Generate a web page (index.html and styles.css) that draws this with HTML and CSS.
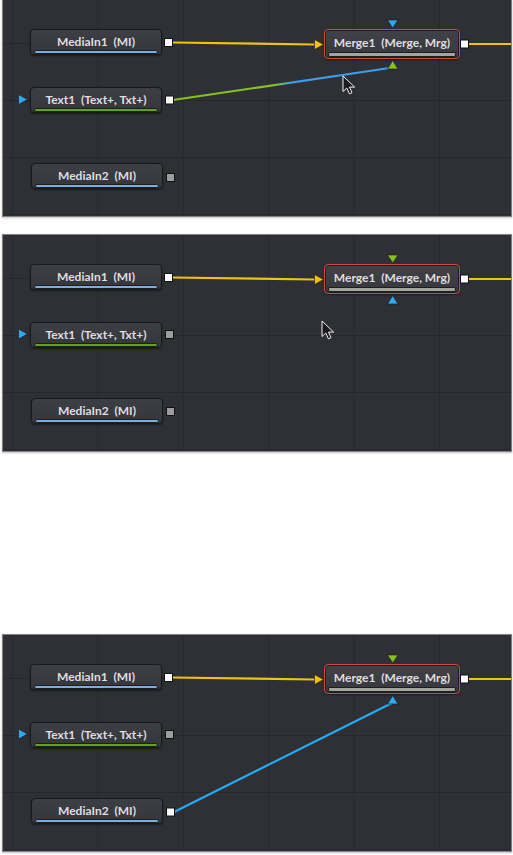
FILE: index.html
```html
<!DOCTYPE html>
<html lang="en">
<head>
    <meta charset="UTF-8">
    <meta name="viewport" content="width=device-width, initial-scale=1.0">
    <title>Node Editor - Merge connections</title>
    <link rel="stylesheet" href="styles.css">
</head>
<body>

    <!-- Step 1: dragging the Text1 output onto the Merge -->
    <div class="panel">
        <div class="node node-media node-in1"><span class="label">MediaIn1  (MI)</span><span class="bar"></span></div>
        <div class="node node-text node-txt"><span class="label">Text1  (Text+, Txt+)</span><span class="bar"></span></div>
        <div class="node node-media node-in2"><span class="label">MediaIn2  (MI)</span><span class="bar"></span></div>
        <div class="node node-merge"><span class="label">Merge1  (Merge, Mrg)</span><span class="bar"></span></div>

        <svg class="wires" width="508" height="216" viewBox="0 0 508 216">
            <defs>
                <linearGradient id="fg" gradientUnits="userSpaceOnUse" x1="170" y1="100" x2="390" y2="67">
                    <stop offset="0.46" stop-color="#86c21e"/>
                    <stop offset="0.54" stop-color="#3c9de8"/>
                </linearGradient>
            </defs>
            <path d="M169 42.5 L312 44.5" class="wire-yellow"/>
            <path d="M465 44 L508 44" class="wire-yellow"/>
            <path d="M170 100 L390 67.5" stroke="url(#fg)" stroke-width="2.2" fill="none"/>

            <rect x="161.5" y="38.5" width="8" height="8" class="port"/>
            <rect x="162.5" y="96" width="8" height="8" class="port"/>
            <rect x="163.5" y="173.5" width="8" height="8" class="port port-off"/>
            <polygon points="15.5,94.5 24.5,99.5 15.5,104.5" class="tri-blue"/>
            <polygon points="311.5,39.5 320.5,44.5 311.5,49.5" class="tri-yellow"/>
            <rect x="457.5" y="40" width="8" height="8" class="port"/>
            <polygon points="384.5,20 395,20 389.7,28" class="tri-blue"/>
            <polygon points="384.5,69 395,69 389.7,60.5" class="tri-green"/>
        </svg>

        <svg class="cursor cursor-a" width="14" height="20" viewBox="0 0 14 20">
            <path d="M1 1 L1 16.5 L4.8 13 L7.4 18.8 L10 17.7 L7.5 12.1 L12.6 12.1 Z"/>
        </svg>
    </div>

    <!-- Step 2: the Merge inputs swapped -->
    <div class="panel">
        <div class="node node-media node-in1"><span class="label">MediaIn1  (MI)</span><span class="bar"></span></div>
        <div class="node node-text node-txt"><span class="label">Text1  (Text+, Txt+)</span><span class="bar"></span></div>
        <div class="node node-media node-in2"><span class="label">MediaIn2  (MI)</span><span class="bar"></span></div>
        <div class="node node-merge"><span class="label">Merge1  (Merge, Mrg)</span><span class="bar"></span></div>

        <svg class="wires" width="508" height="216" viewBox="0 0 508 216">
            <path d="M169 42.5 L312 44.5" class="wire-yellow"/>
            <path d="M465 44 L508 44" class="wire-yellow"/>

            <rect x="161.5" y="38.5" width="8" height="8" class="port"/>
            <rect x="162.5" y="95.5" width="8" height="8" class="port port-off"/>
            <rect x="163.5" y="172.5" width="8" height="8" class="port port-off"/>
            <polygon points="15.5,94 24.5,99 15.5,104" class="tri-blue"/>
            <polygon points="311.5,39.5 320.5,44.5 311.5,49.5" class="tri-yellow"/>
            <rect x="457.5" y="40" width="8" height="8" class="port"/>
            <polygon points="384.5,20 395,20 389.7,28" class="tri-green"/>
            <polygon points="384.5,69 395,69 389.7,60.5" class="tri-blue"/>
        </svg>

        <svg class="cursor cursor-b" width="14" height="20" viewBox="0 0 14 20">
            <path d="M1 1 L1 16.5 L4.8 13 L7.4 18.8 L10 17.7 L7.5 12.1 L12.6 12.1 Z"/>
        </svg>
    </div>

    <!-- Step 3: MediaIn2 connected to the Merge -->
    <div class="panel panel-last">
        <div class="node node-media node-in1"><span class="label">MediaIn1  (MI)</span><span class="bar"></span></div>
        <div class="node node-text node-txt"><span class="label">Text1  (Text+, Txt+)</span><span class="bar"></span></div>
        <div class="node node-media node-in2"><span class="label">MediaIn2  (MI)</span><span class="bar"></span></div>
        <div class="node node-merge"><span class="label">Merge1  (Merge, Mrg)</span><span class="bar"></span></div>

        <svg class="wires" width="508" height="216" viewBox="0 0 508 216">
            <path d="M169 42.5 L312 44.5" class="wire-yellow"/>
            <path d="M465 44 L508 44" class="wire-yellow"/>
            <path d="M171 177 L390 67.5" class="wire-blue"/>

            <rect x="161.5" y="38.5" width="8" height="8" class="port"/>
            <rect x="162.5" y="95.5" width="8" height="8" class="port port-off"/>
            <rect x="163.5" y="173" width="8" height="8" class="port"/>
            <polygon points="15.5,94 24.5,99 15.5,104" class="tri-blue"/>
            <polygon points="311.5,39.5 320.5,44.5 311.5,49.5" class="tri-yellow"/>
            <rect x="457.5" y="40" width="8" height="8" class="port"/>
            <polygon points="384.5,20 395,20 389.7,28" class="tri-green"/>
            <polygon points="384.5,69 395,69 389.7,60.5" class="tri-blue"/>
        </svg>
    </div>

</body>
</html>
```

FILE: styles.css
```css
body {
    margin: 0;
    padding: 0;
    background-color: #fff;
    font-family: Lato, "Open Sans", sans-serif;
}

/* node editor panel with its grid */
.panel {
    position: relative;
    width: 508px;
    height: 216px;
    margin: 0 0 19px 3px;
    overflow: hidden;
    background-color: #2f3035;
    background-image:
        linear-gradient(to right, #27282c 1px, transparent 1px),
        linear-gradient(to bottom, #27282c 1px, transparent 1px);
    background-size: 85.4px 100%, 100% 57px;
    background-position: 9px 0, 0 43px;
    box-shadow: 0 0 0 1px #808185, 0 1px 2px 1px rgba(0, 0, 0, 0.25);
}

.panel-last {
    margin-top: 184px;
}

.node {
    position: absolute;
    display: flex;
    flex-direction: column;
    box-sizing: border-box;
    width: 132px;
    height: 26px;
    padding: 3px 3px 0;
    border: 1px solid #18191b;
    border-radius: 4px;
    background: linear-gradient(#3e3f44, #35363b);
    box-shadow: 0 1px 2px rgba(0, 0, 0, 0.45);
}

.label {
    display: block;
    height: 16px;
    line-height: 17px;
    font-size: 12px;
    font-weight: 700;
    color: #dedee0;
    text-align: center;
    white-space: pre;
}

.bar {
    display: block;
    height: 3px;
    margin-top: 1px;
    border: 1px solid #1d1e21;
    border-radius: 2px;
}

.node-media .bar {
    background-color: #7aaee0;
}

.node-text .bar {
    background-color: #63a118;
}

.node-in1 {
    left: 27px;
    top: 29px;
}

.node-txt {
    left: 27px;
    top: 87px;
}

.node-in2 {
    left: 28px;
    top: 163px;
}

.node-merge {
    left: 321px;
    top: 29px;
    width: 136px;
    height: 30px;
    padding-top: 4px;
    border: 1px solid #cf4b3d;
    background: linear-gradient(#414247, #37383d);
    box-shadow: inset 0 0 0 1px #1c1d20, 0 1px 2px rgba(0, 0, 0, 0.45);
}

.node-merge .bar {
    margin-top: 2px;
    height: 3px;
    background-color: #a3a4a7;
}

/* wires and ports */
.wires {
    position: absolute;
    left: 0;
    top: 0;
    pointer-events: none;
}

.wire-yellow {
    stroke: #f0c30e;
    stroke-width: 2.2;
    fill: none;
}

.wire-blue {
    stroke: #23a9ef;
    stroke-width: 2.2;
    fill: none;
}

.port {
    fill: #fafafa;
    stroke: #111;
    stroke-width: 1;
}

.port-off {
    fill: #9c9d9f;
}

.tri-blue {
    fill: #2ea8ee;
    stroke: #15161a;
    stroke-width: 0.6;
}

.tri-green {
    fill: #86c21e;
    stroke: #15161a;
    stroke-width: 0.6;
}

.tri-yellow {
    fill: #f0c30e;
    stroke: #15161a;
    stroke-width: 0.6;
}

.cursor {
    position: absolute;
    pointer-events: none;
}

.cursor path {
    fill: #1b1b1d;
    stroke: #f2f2f2;
    stroke-width: 1;
    stroke-linejoin: round;
}

.cursor-a {
    left: 339px;
    top: 75px;
}

.cursor-b {
    left: 318px;
    top: 85px;
}
```
